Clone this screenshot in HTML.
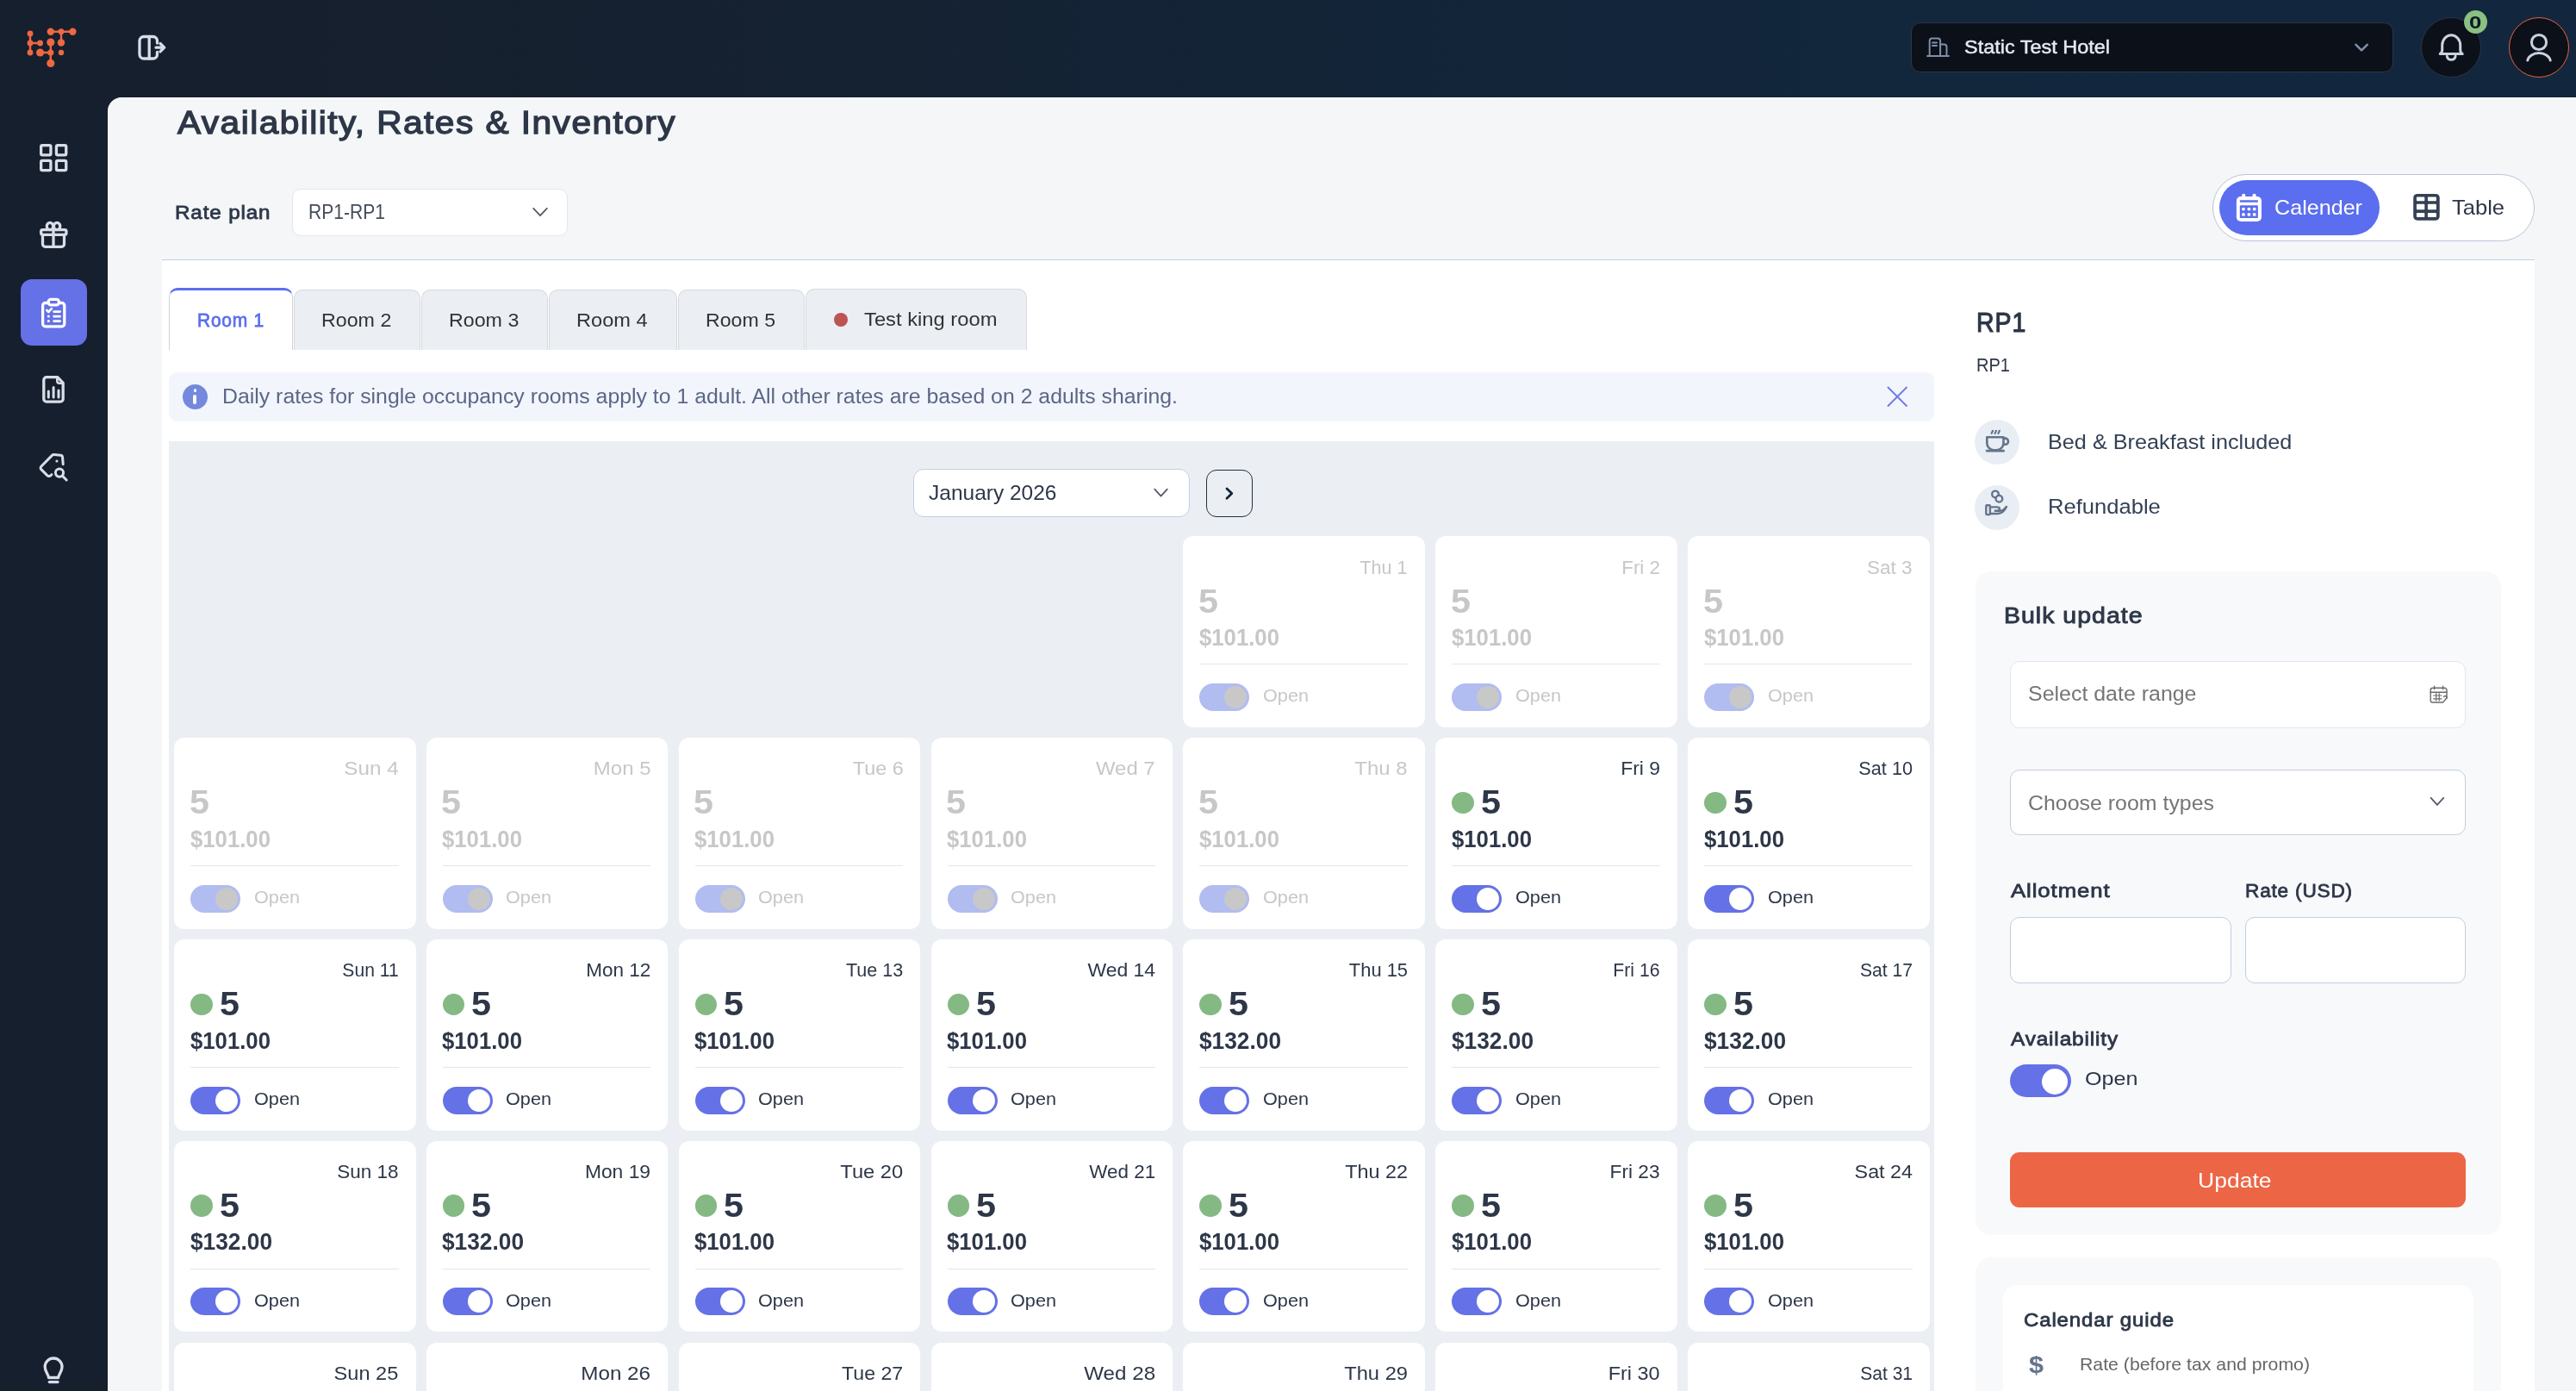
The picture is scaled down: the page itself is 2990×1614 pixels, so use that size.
<!DOCTYPE html>
<html lang="en"><head><meta charset="utf-8"><title>Availability, Rates &amp; Inventory</title><style>
html,body{margin:0;padding:0;width:2990px;height:1614px;overflow:hidden;}
body{background:#f5f6f8;font-family:"Liberation Sans", sans-serif;}
#root{position:relative;width:2990px;height:1614px;overflow:hidden;}
.a{position:absolute;box-sizing:border-box;}
.txt{position:absolute;left:0;top:0;width:2990px;height:1614px;will-change:transform;}
.t{position:absolute;white-space:pre;line-height:normal;font-family:"Liberation Sans", sans-serif;}
</style></head><body><div id="root">
<div class="a" style="left:0px;top:0px;width:2990px;height:113px;background:linear-gradient(90deg,#161f2d 0%,#161f2d 8%,#152232 33%,#132437 50%,#12263c 72%,#12273e 100%);"></div>
<div class="a" style="left:0px;top:0px;width:125px;height:1614px;background:#161f2d;"></div>
<div class="a" style="left:125px;top:113px;width:20px;height:20px;background:#161f2d;"></div>
<div class="a" style="left:125px;top:113px;width:2865px;height:1501px;background:#f5f6f8;border-radius:16px 0 0 0;border-top:1px solid #ffffff;"></div>
<div class="a" style="left:188px;top:301px;width:2754px;height:1313px;background:#ffffff;border-top:1px solid #c3cede;"></div>
<svg class="a" style="left:28px;top:28px;" width="64" height="54" viewBox="28 28 64 54" fill="none"><g stroke="#ee6842" stroke-width="2.4" stroke-linecap="round"><path d="M35 39V61M35 50H46.6M58.8 36.7H84.4M71 36.7V49.5M58.8 49V73.4M46.6 61H58.8"/></g><g fill="#ee6842"><circle cx="35" cy="39" r="3.4"/><circle cx="35" cy="50" r="3.4"/><circle cx="35" cy="61" r="3.4"/><circle cx="46.6" cy="50" r="3.4"/><circle cx="58.8" cy="36.7" r="4.2"/><circle cx="71" cy="36.7" r="3.4"/><circle cx="84.4" cy="36.7" r="4.2"/><circle cx="71" cy="49.5" r="4.2"/><circle cx="71" cy="61" r="3.2"/><circle cx="58.8" cy="49" r="4.6"/><circle cx="58.8" cy="61" r="3.6"/><circle cx="46.6" cy="61" r="4.6"/><circle cx="58.8" cy="73.4" r="4.6"/></g></svg>
<svg class="a" style="left:155px;top:36px;" width="44" height="40" viewBox="155 36 44 40" fill="none"><g stroke="#d8dde8" stroke-width="3.3" stroke-linecap="round" stroke-linejoin="round"><path d="M182.5 50V47.5a5 5 0 0 0-5-5H167a5 5 0 0 0-5 5V63a5 5 0 0 0 5 5h10.5a5 5 0 0 0 5-5V60.5"/><path d="M173.2 42.5V68"/><path d="M181 55.2H190M186 50.5l4.7 4.7-4.7 4.7"/></g></svg>
<svg class="a" style="left:40px;top:160px;" width="46" height="46" viewBox="40 160 46 46" fill="none"><g stroke="#d8dde8" stroke-width="3.3" stroke-linecap="round" stroke-linejoin="round"><rect x="47.65" y="168.65" width="11.3" height="11.3" rx="1.6"/><rect x="65.45" y="168.65" width="11.3" height="11.3" rx="1.6"/><rect x="47.65" y="186.4" width="11.3" height="11.3" rx="1.6"/><rect x="65.45" y="186.4" width="11.3" height="11.3" rx="1.6"/></g></svg>
<svg class="a" style="left:40px;top:250px;" width="46" height="44" viewBox="40 250 46 44" fill="none"><g stroke="#d8dde8" stroke-width="3.3" stroke-linecap="round" stroke-linejoin="round"><rect x="47.7" y="266.55" width="29.25" height="5.85" rx="1.8"/><path d="M49.5 272.4V283.3a3 3 0 0 0 3 3h19a3 3 0 0 0 3-3V272.4"/><path d="M62 266.5V286.3"/><ellipse cx="58" cy="262.5" rx="3.7" ry="4.2"/><ellipse cx="66.1" cy="262.5" rx="3.7" ry="4.2"/></g></svg>
<div class="a" style="left:24px;top:324px;width:77px;height:77px;background:#6571e6;border-radius:13px;"></div>
<svg class="a" style="left:40px;top:340px;" width="46" height="46" viewBox="40 340 46 46" fill="none"><g stroke="#ffffff" stroke-width="3.3" stroke-linecap="round" stroke-linejoin="round"><path d="M55 351.5h-2.4a3 3 0 0 0-3 3v21.3a3 3 0 0 0 3 3h19.2a3 3 0 0 0 3-3v-21.3a3 3 0 0 0-3-3H69.6"/><rect x="56.3" y="347.3" width="12" height="6.6" rx="2.6"/><path d="M54.3 360l2 2 3.6-3.8" stroke-width="2.6"/><path d="M62.6 361.6h7M62.6 367.1h7M62.6 372.6h7" stroke-width="2.8"/><path d="M56.3 367.1h.1M56.3 372.6h.1" stroke-width="3"/></g></svg>
<svg class="a" style="left:40px;top:430px;" width="46" height="44" viewBox="40 430 46 44" fill="none"><g stroke="#d8dde8" stroke-width="3.3" stroke-linecap="round" stroke-linejoin="round"><path d="M66.8 437.7H54a3.2 3.2 0 0 0-3.2 3.2v22a3.2 3.2 0 0 0 3.2 3.2h16a3.2 3.2 0 0 0 3.2-3.2V444.3z"/><path d="M66.3 438.5v3.600a2.600 2.600 0 0 0 2.600 2.600h3.800" stroke-width="2.6"/><path d="M56.3 454v7M62.1 449.5v11.5M68 453v8" stroke-width="3"/></g></svg>
<svg class="a" style="left:40px;top:520px;" width="46" height="44" viewBox="40 520 46 44" fill="none"><g stroke="#d8dde8" stroke-width="3.0" stroke-linecap="round" stroke-linejoin="round"><path d="M60 550.6c-1.6 2-3.4 2.7-5.2 1l-7-7a2.4 2.4 0 0 1 0-3.4l12.4-12.6a3.4 3.4 0 0 1 2.6-1l7.4.7a2.6 2.6 0 0 1 2.4 2.4l.6 8"/><path d="M65.9 535.1h.1" stroke-width="3"/><circle cx="69" cy="548.6" r="4.6"/><path d="M72.6 552.4l4.6 4.6"/></g></svg>
<svg class="a" style="left:44px;top:1566px;" width="40" height="44" viewBox="44 1566 40 44" fill="none"><g stroke="#d8dde8" stroke-width="3.3" stroke-linecap="round" stroke-linejoin="round"><path d="M56.5 1598.5c0-3.6-4.3-6.3-4.3-12.6a9.9 9.9 0 0 1 19.8 0c0 6.300-4.3 9-4.300 12.600z"/><path d="M57.300 1603.600H67"/></g></svg>
<div class="a" style="left:2218px;top:26px;width:560px;height:58px;background:#0b1019;border-radius:11px;border:1px solid #2b3648;"></div>
<svg class="a" style="left:2232px;top:40px;" width="36" height="30" viewBox="2232 40 36 30" fill="none"><g stroke="#7f8fa6" stroke-width="2" stroke-linecap="round" stroke-linejoin="round"><path d="M2239.700 64.500V47.500a3 3 0 0 1 3-3h6.400a3 3 0 0 1 3 3V64.500"/><path d="M2252.100 51.600h4.400a3 3 0 0 1 3 3V64.500"/><path d="M2237 65h25"/><path d="M2243 49.400h5M2243 52.900h5"/></g></svg>
<svg class="a" style="left:2728px;top:44px;" width="28" height="22" viewBox="2728 44 28 22" fill="none"><path d="M2734.500 51.800l6.600 6.600 6.600-6.600" stroke="#7f8fa6" stroke-width="2.6" stroke-linecap="round" stroke-linejoin="round"/></svg>
<div class="a" style="left:2810px;top:20px;width:70px;height:70px;background:#0b1019;border-radius:35px;border:1px solid #2a3445;"></div>
<svg class="a" style="left:2826px;top:34px;" width="40" height="42" viewBox="2826 34 40 42" fill="none"><g stroke="#c9d2de" stroke-width="3" stroke-linecap="round" stroke-linejoin="round"><path d="M2832.200 62.600c1.800-1.200 2.500-2.600 2.500-4.600V52.300a10.500 11.500 0 0 1 21 0v5.700c0 2 .7 3.400 2.500 4.600z"/><path d="M2840.300 65.200a5 5.200 0 0 0 9.800 0"/></g></svg>
<div class="a" style="left:2860px;top:12px;width:27px;height:27px;background:#8bc083;border-radius:14px;"></div>
<div class="a" style="left:2912px;top:20px;width:70px;height:70px;background:#0b1019;border-radius:35px;border:1.5px solid #e8623f;"></div>
<svg class="a" style="left:2926px;top:36px;" width="42" height="40" viewBox="2926 36 42 40" fill="none"><g stroke="#c9d2de" stroke-width="3" stroke-linecap="round"><circle cx="2947" cy="49" r="8.600"/><path d="M2933.800 70a13.400 10.200 0 0 1 26.400 0"/></g></svg>
<div class="a" style="left:339px;top:219px;width:320px;height:55px;background:#ffffff;border-radius:10px;border:1px solid #e2e6ed;"></div>
<svg class="a" style="left:612px;top:236px;" width="30" height="22" viewBox="612 236 30 22" fill="none"><path d="M619.200 241.800l7.800 8.400 7.800-8.400" stroke="#555b66" stroke-width="1.800" stroke-linecap="round" stroke-linejoin="round"/></svg>
<div class="a" style="left:2568px;top:202px;width:374px;height:78px;background:#ffffff;border-radius:39px;border:1px solid #b9c5d8;"></div>
<div class="a" style="left:2576px;top:209px;width:186px;height:64px;background:#5b6eef;border-radius:32px;"></div>
<svg class="a" style="left:2592px;top:222px;" width="36" height="38" viewBox="2592 222 36 38" fill="none"><rect x="2595.9" y="228" width="29.1" height="29" rx="5" fill="#fff"/><rect x="2602.1" y="224.8" width="4.2" height="7" rx="2" fill="#fff"/><rect x="2614.5" y="224.8" width="4.2" height="7" rx="2" fill="#fff"/><rect x="2599.8" y="232.2" width="21.1" height="2.5" rx="0.6" fill="#5b6eef"/><rect x="2599.8" y="238.3" width="21.1" height="14.7" rx="0.8" fill="#5b6eef"/><circle cx="2604" cy="242.6" r="1.95" fill="#fff"/><circle cx="2610.4" cy="242.6" r="1.95" fill="#fff"/><circle cx="2616.7" cy="242.6" r="1.95" fill="#fff"/><circle cx="2604" cy="248.9" r="1.95" fill="#fff"/><circle cx="2610.4" cy="248.9" r="1.95" fill="#fff"/><circle cx="2616.7" cy="248.9" r="1.95" fill="#fff"/></svg>
<svg class="a" style="left:2798px;top:222px;" width="38" height="38" viewBox="2798 222 38 38" fill="none"><rect x="2801.2" y="225" width="30.5" height="30.7" rx="4.6" fill="#334155"/><rect x="2804.9" y="228.6" width="9.4" height="4.7" rx="0.8" fill="#ffffff"/><rect x="2804.9" y="236.8" width="9.4" height="6.5" rx="0.8" fill="#ffffff"/><rect x="2804.9" y="246.9" width="9.4" height="5.1" rx="0.8" fill="#ffffff"/><rect x="2817.9" y="228.6" width="10" height="4.7" rx="0.8" fill="#ffffff"/><rect x="2817.9" y="236.8" width="10" height="6.5" rx="0.8" fill="#ffffff"/><rect x="2817.9" y="246.9" width="10" height="5.1" rx="0.8" fill="#ffffff"/></svg>
<div class="a" style="left:196px;top:334px;width:143.5px;height:72px;background:#fff;border:1px solid #cfd3d8;border-bottom:none;border-top:3px solid #5b6eef;border-radius:10px 10px 0 0;"></div>
<div class="a" style="left:341px;top:336px;width:146.5px;height:70px;background:#ebeff3;border:1px solid #d6d9dd;border-bottom:none;border-radius:10px 10px 0 0;"></div>
<div class="a" style="left:489px;top:336px;width:146.5px;height:70px;background:#ebeff3;border:1px solid #d6d9dd;border-bottom:none;border-radius:10px 10px 0 0;"></div>
<div class="a" style="left:637px;top:336px;width:148.5px;height:70px;background:#ebeff3;border:1px solid #d6d9dd;border-bottom:none;border-radius:10px 10px 0 0;"></div>
<div class="a" style="left:787px;top:336px;width:146.5px;height:70px;background:#ebeff3;border:1px solid #d6d9dd;border-bottom:none;border-radius:10px 10px 0 0;"></div>
<div class="a" style="left:935px;top:335px;width:256.5px;height:71px;background:#ebeff3;border:1px solid #d6d9dd;border-bottom:none;border-radius:10px 10px 0 0;"></div>
<div class="a" style="left:968px;top:363px;width:16px;height:16px;background:#bd5353;border-radius:8px;"></div>
<div class="a" style="left:196px;top:432px;width:2049px;height:57px;background:#f3f5fd;border-radius:9px;"></div>
<div class="a" style="left:212px;top:446px;width:29px;height:29px;background:#7489dd;border-radius:15px;"></div>
<div class="a" style="left:224.7px;top:451.4px;width:3.5px;height:3.5px;background:#fff;border-radius:2px;"></div>
<div class="a" style="left:224.4px;top:458.4px;width:4.1px;height:10.9px;background:#fff;border-radius:2px;"></div>
<svg class="a" style="left:2188px;top:446px;" width="30" height="30" viewBox="2188 446 30 30" fill="none"><path d="M2191.500 449.500l21.500 21.500M2213 449.500l-21.500 21.500" stroke="#6b7adf" stroke-width="1.800" stroke-linecap="round"/></svg>
<div class="a" style="left:196px;top:512px;width:2049px;height:1102px;background:#ebeff3;"></div>
<div class="a" style="left:1060px;top:544px;width:321px;height:56px;background:#ffffff;border-radius:12px;border:1px solid #c3cede;"></div>
<svg class="a" style="left:1334px;top:560px;" width="28" height="24" viewBox="1334 560 28 24" fill="none"><path d="M1340.200 567.600l7.300 8 7.300-8" stroke="#555b66" stroke-width="1.800" stroke-linecap="round" stroke-linejoin="round"/></svg>
<div class="a" style="left:1400px;top:545px;width:54px;height:55px;border-radius:12px;border:1.5px solid #1f3046;"></div>
<svg class="a" style="left:1416px;top:560px;" width="22" height="26" viewBox="1416 560 22 26" fill="none"><path d="M1424 567l5.800 5.600-5.800 5.600" stroke="#14243a" stroke-width="2.800" stroke-linecap="round" stroke-linejoin="round"/></svg>
<div class="a" style="left:1373.4px;top:622.4px;width:280.5px;height:221.8px;background:#fff;border-radius:12px;"></div>
<div class="a" style="left:1392.4px;top:770.4px;width:241.5px;height:1px;background:#e2e6ee;"></div>
<div class="a" style="left:1392.4px;top:793.0999999999999px;width:58px;height:32px;background:#b1bcf0;border-radius:16px;"></div>
<div class="a" style="left:1421.4px;top:796.0999999999999px;width:26px;height:26px;background:#c8c8c8;border-radius:13px;"></div>
<div class="a" style="left:1666.3px;top:622.4px;width:280.5px;height:221.8px;background:#fff;border-radius:12px;"></div>
<div class="a" style="left:1685.3px;top:770.4px;width:241.5px;height:1px;background:#e2e6ee;"></div>
<div class="a" style="left:1685.3px;top:793.0999999999999px;width:58px;height:32px;background:#b1bcf0;border-radius:16px;"></div>
<div class="a" style="left:1714.3px;top:796.0999999999999px;width:26px;height:26px;background:#c8c8c8;border-radius:13px;"></div>
<div class="a" style="left:1959.1px;top:622.4px;width:280.5px;height:221.8px;background:#fff;border-radius:12px;"></div>
<div class="a" style="left:1978.1px;top:770.4px;width:241.5px;height:1px;background:#e2e6ee;"></div>
<div class="a" style="left:1978.1px;top:793.0999999999999px;width:58px;height:32px;background:#b1bcf0;border-radius:16px;"></div>
<div class="a" style="left:2007.1px;top:796.0999999999999px;width:26px;height:26px;background:#c8c8c8;border-radius:13px;"></div>
<div class="a" style="left:202px;top:856.1px;width:280.5px;height:221.8px;background:#fff;border-radius:12px;"></div>
<div class="a" style="left:221px;top:1004.1px;width:241.5px;height:1px;background:#e2e6ee;"></div>
<div class="a" style="left:221px;top:1026.8px;width:58px;height:32px;background:#b1bcf0;border-radius:16px;"></div>
<div class="a" style="left:250px;top:1029.8px;width:26px;height:26px;background:#c8c8c8;border-radius:13px;"></div>
<div class="a" style="left:494.8px;top:856.1px;width:280.5px;height:221.8px;background:#fff;border-radius:12px;"></div>
<div class="a" style="left:513.8px;top:1004.1px;width:241.5px;height:1px;background:#e2e6ee;"></div>
<div class="a" style="left:513.8px;top:1026.8px;width:58px;height:32px;background:#b1bcf0;border-radius:16px;"></div>
<div class="a" style="left:542.8px;top:1029.8px;width:26px;height:26px;background:#c8c8c8;border-radius:13px;"></div>
<div class="a" style="left:787.7px;top:856.1px;width:280.5px;height:221.8px;background:#fff;border-radius:12px;"></div>
<div class="a" style="left:806.7px;top:1004.1px;width:241.5px;height:1px;background:#e2e6ee;"></div>
<div class="a" style="left:806.7px;top:1026.8px;width:58px;height:32px;background:#b1bcf0;border-radius:16px;"></div>
<div class="a" style="left:835.7px;top:1029.8px;width:26px;height:26px;background:#c8c8c8;border-radius:13px;"></div>
<div class="a" style="left:1080.5px;top:856.1px;width:280.5px;height:221.8px;background:#fff;border-radius:12px;"></div>
<div class="a" style="left:1099.5px;top:1004.1px;width:241.5px;height:1px;background:#e2e6ee;"></div>
<div class="a" style="left:1099.5px;top:1026.8px;width:58px;height:32px;background:#b1bcf0;border-radius:16px;"></div>
<div class="a" style="left:1128.5px;top:1029.8px;width:26px;height:26px;background:#c8c8c8;border-radius:13px;"></div>
<div class="a" style="left:1373.4px;top:856.1px;width:280.5px;height:221.8px;background:#fff;border-radius:12px;"></div>
<div class="a" style="left:1392.4px;top:1004.1px;width:241.5px;height:1px;background:#e2e6ee;"></div>
<div class="a" style="left:1392.4px;top:1026.8px;width:58px;height:32px;background:#b1bcf0;border-radius:16px;"></div>
<div class="a" style="left:1421.4px;top:1029.8px;width:26px;height:26px;background:#c8c8c8;border-radius:13px;"></div>
<div class="a" style="left:1666.3px;top:856.1px;width:280.5px;height:221.8px;background:#fff;border-radius:12px;"></div>
<div class="a" style="left:1685.3px;top:918.7px;width:25.5px;height:25.5px;background:#84b984;border-radius:13px;"></div>
<div class="a" style="left:1685.3px;top:1004.1px;width:241.5px;height:1px;background:#e2e6ee;"></div>
<div class="a" style="left:1685.3px;top:1026.8px;width:58px;height:32px;background:#6571e6;border-radius:16px;"></div>
<div class="a" style="left:1714.3px;top:1029.8px;width:26px;height:26px;background:#fff;border-radius:13px;"></div>
<div class="a" style="left:1959.1px;top:856.1px;width:280.5px;height:221.8px;background:#fff;border-radius:12px;"></div>
<div class="a" style="left:1978.1px;top:918.7px;width:25.5px;height:25.5px;background:#84b984;border-radius:13px;"></div>
<div class="a" style="left:1978.1px;top:1004.1px;width:241.5px;height:1px;background:#e2e6ee;"></div>
<div class="a" style="left:1978.1px;top:1026.8px;width:58px;height:32px;background:#6571e6;border-radius:16px;"></div>
<div class="a" style="left:2007.1px;top:1029.8px;width:26px;height:26px;background:#fff;border-radius:13px;"></div>
<div class="a" style="left:202px;top:1089.9px;width:280.5px;height:221.8px;background:#fff;border-radius:12px;"></div>
<div class="a" style="left:221px;top:1152.5px;width:25.5px;height:25.5px;background:#84b984;border-radius:13px;"></div>
<div class="a" style="left:221px;top:1237.9px;width:241.5px;height:1px;background:#e2e6ee;"></div>
<div class="a" style="left:221px;top:1260.6000000000001px;width:58px;height:32px;background:#6571e6;border-radius:16px;"></div>
<div class="a" style="left:250px;top:1263.6000000000001px;width:26px;height:26px;background:#fff;border-radius:13px;"></div>
<div class="a" style="left:494.8px;top:1089.9px;width:280.5px;height:221.8px;background:#fff;border-radius:12px;"></div>
<div class="a" style="left:513.8px;top:1152.5px;width:25.5px;height:25.5px;background:#84b984;border-radius:13px;"></div>
<div class="a" style="left:513.8px;top:1237.9px;width:241.5px;height:1px;background:#e2e6ee;"></div>
<div class="a" style="left:513.8px;top:1260.6000000000001px;width:58px;height:32px;background:#6571e6;border-radius:16px;"></div>
<div class="a" style="left:542.8px;top:1263.6000000000001px;width:26px;height:26px;background:#fff;border-radius:13px;"></div>
<div class="a" style="left:787.7px;top:1089.9px;width:280.5px;height:221.8px;background:#fff;border-radius:12px;"></div>
<div class="a" style="left:806.7px;top:1152.5px;width:25.5px;height:25.5px;background:#84b984;border-radius:13px;"></div>
<div class="a" style="left:806.7px;top:1237.9px;width:241.5px;height:1px;background:#e2e6ee;"></div>
<div class="a" style="left:806.7px;top:1260.6000000000001px;width:58px;height:32px;background:#6571e6;border-radius:16px;"></div>
<div class="a" style="left:835.7px;top:1263.6000000000001px;width:26px;height:26px;background:#fff;border-radius:13px;"></div>
<div class="a" style="left:1080.5px;top:1089.9px;width:280.5px;height:221.8px;background:#fff;border-radius:12px;"></div>
<div class="a" style="left:1099.5px;top:1152.5px;width:25.5px;height:25.5px;background:#84b984;border-radius:13px;"></div>
<div class="a" style="left:1099.5px;top:1237.9px;width:241.5px;height:1px;background:#e2e6ee;"></div>
<div class="a" style="left:1099.5px;top:1260.6000000000001px;width:58px;height:32px;background:#6571e6;border-radius:16px;"></div>
<div class="a" style="left:1128.5px;top:1263.6000000000001px;width:26px;height:26px;background:#fff;border-radius:13px;"></div>
<div class="a" style="left:1373.4px;top:1089.9px;width:280.5px;height:221.8px;background:#fff;border-radius:12px;"></div>
<div class="a" style="left:1392.4px;top:1152.5px;width:25.5px;height:25.5px;background:#84b984;border-radius:13px;"></div>
<div class="a" style="left:1392.4px;top:1237.9px;width:241.5px;height:1px;background:#e2e6ee;"></div>
<div class="a" style="left:1392.4px;top:1260.6000000000001px;width:58px;height:32px;background:#6571e6;border-radius:16px;"></div>
<div class="a" style="left:1421.4px;top:1263.6000000000001px;width:26px;height:26px;background:#fff;border-radius:13px;"></div>
<div class="a" style="left:1666.3px;top:1089.9px;width:280.5px;height:221.8px;background:#fff;border-radius:12px;"></div>
<div class="a" style="left:1685.3px;top:1152.5px;width:25.5px;height:25.5px;background:#84b984;border-radius:13px;"></div>
<div class="a" style="left:1685.3px;top:1237.9px;width:241.5px;height:1px;background:#e2e6ee;"></div>
<div class="a" style="left:1685.3px;top:1260.6000000000001px;width:58px;height:32px;background:#6571e6;border-radius:16px;"></div>
<div class="a" style="left:1714.3px;top:1263.6000000000001px;width:26px;height:26px;background:#fff;border-radius:13px;"></div>
<div class="a" style="left:1959.1px;top:1089.9px;width:280.5px;height:221.8px;background:#fff;border-radius:12px;"></div>
<div class="a" style="left:1978.1px;top:1152.5px;width:25.5px;height:25.5px;background:#84b984;border-radius:13px;"></div>
<div class="a" style="left:1978.1px;top:1237.9px;width:241.5px;height:1px;background:#e2e6ee;"></div>
<div class="a" style="left:1978.1px;top:1260.6000000000001px;width:58px;height:32px;background:#6571e6;border-radius:16px;"></div>
<div class="a" style="left:2007.1px;top:1263.6000000000001px;width:26px;height:26px;background:#fff;border-radius:13px;"></div>
<div class="a" style="left:202px;top:1323.7px;width:280.5px;height:221.8px;background:#fff;border-radius:12px;"></div>
<div class="a" style="left:221px;top:1386.3px;width:25.5px;height:25.5px;background:#84b984;border-radius:13px;"></div>
<div class="a" style="left:221px;top:1471.7px;width:241.5px;height:1px;background:#e2e6ee;"></div>
<div class="a" style="left:221px;top:1494.4px;width:58px;height:32px;background:#6571e6;border-radius:16px;"></div>
<div class="a" style="left:250px;top:1497.4px;width:26px;height:26px;background:#fff;border-radius:13px;"></div>
<div class="a" style="left:494.8px;top:1323.7px;width:280.5px;height:221.8px;background:#fff;border-radius:12px;"></div>
<div class="a" style="left:513.8px;top:1386.3px;width:25.5px;height:25.5px;background:#84b984;border-radius:13px;"></div>
<div class="a" style="left:513.8px;top:1471.7px;width:241.5px;height:1px;background:#e2e6ee;"></div>
<div class="a" style="left:513.8px;top:1494.4px;width:58px;height:32px;background:#6571e6;border-radius:16px;"></div>
<div class="a" style="left:542.8px;top:1497.4px;width:26px;height:26px;background:#fff;border-radius:13px;"></div>
<div class="a" style="left:787.7px;top:1323.7px;width:280.5px;height:221.8px;background:#fff;border-radius:12px;"></div>
<div class="a" style="left:806.7px;top:1386.3px;width:25.5px;height:25.5px;background:#84b984;border-radius:13px;"></div>
<div class="a" style="left:806.7px;top:1471.7px;width:241.5px;height:1px;background:#e2e6ee;"></div>
<div class="a" style="left:806.7px;top:1494.4px;width:58px;height:32px;background:#6571e6;border-radius:16px;"></div>
<div class="a" style="left:835.7px;top:1497.4px;width:26px;height:26px;background:#fff;border-radius:13px;"></div>
<div class="a" style="left:1080.5px;top:1323.7px;width:280.5px;height:221.8px;background:#fff;border-radius:12px;"></div>
<div class="a" style="left:1099.5px;top:1386.3px;width:25.5px;height:25.5px;background:#84b984;border-radius:13px;"></div>
<div class="a" style="left:1099.5px;top:1471.7px;width:241.5px;height:1px;background:#e2e6ee;"></div>
<div class="a" style="left:1099.5px;top:1494.4px;width:58px;height:32px;background:#6571e6;border-radius:16px;"></div>
<div class="a" style="left:1128.5px;top:1497.4px;width:26px;height:26px;background:#fff;border-radius:13px;"></div>
<div class="a" style="left:1373.4px;top:1323.7px;width:280.5px;height:221.8px;background:#fff;border-radius:12px;"></div>
<div class="a" style="left:1392.4px;top:1386.3px;width:25.5px;height:25.5px;background:#84b984;border-radius:13px;"></div>
<div class="a" style="left:1392.4px;top:1471.7px;width:241.5px;height:1px;background:#e2e6ee;"></div>
<div class="a" style="left:1392.4px;top:1494.4px;width:58px;height:32px;background:#6571e6;border-radius:16px;"></div>
<div class="a" style="left:1421.4px;top:1497.4px;width:26px;height:26px;background:#fff;border-radius:13px;"></div>
<div class="a" style="left:1666.3px;top:1323.7px;width:280.5px;height:221.8px;background:#fff;border-radius:12px;"></div>
<div class="a" style="left:1685.3px;top:1386.3px;width:25.5px;height:25.5px;background:#84b984;border-radius:13px;"></div>
<div class="a" style="left:1685.3px;top:1471.7px;width:241.5px;height:1px;background:#e2e6ee;"></div>
<div class="a" style="left:1685.3px;top:1494.4px;width:58px;height:32px;background:#6571e6;border-radius:16px;"></div>
<div class="a" style="left:1714.3px;top:1497.4px;width:26px;height:26px;background:#fff;border-radius:13px;"></div>
<div class="a" style="left:1959.1px;top:1323.7px;width:280.5px;height:221.8px;background:#fff;border-radius:12px;"></div>
<div class="a" style="left:1978.1px;top:1386.3px;width:25.5px;height:25.5px;background:#84b984;border-radius:13px;"></div>
<div class="a" style="left:1978.1px;top:1471.7px;width:241.5px;height:1px;background:#e2e6ee;"></div>
<div class="a" style="left:1978.1px;top:1494.4px;width:58px;height:32px;background:#6571e6;border-radius:16px;"></div>
<div class="a" style="left:2007.1px;top:1497.4px;width:26px;height:26px;background:#fff;border-radius:13px;"></div>
<div class="a" style="left:202px;top:1557.5px;width:280.5px;height:221.8px;background:#fff;border-radius:12px;"></div>
<div class="a" style="left:494.8px;top:1557.5px;width:280.5px;height:221.8px;background:#fff;border-radius:12px;"></div>
<div class="a" style="left:787.7px;top:1557.5px;width:280.5px;height:221.8px;background:#fff;border-radius:12px;"></div>
<div class="a" style="left:1080.5px;top:1557.5px;width:280.5px;height:221.8px;background:#fff;border-radius:12px;"></div>
<div class="a" style="left:1373.4px;top:1557.5px;width:280.5px;height:221.8px;background:#fff;border-radius:12px;"></div>
<div class="a" style="left:1666.3px;top:1557.5px;width:280.5px;height:221.8px;background:#fff;border-radius:12px;"></div>
<div class="a" style="left:1959.1px;top:1557.5px;width:280.5px;height:221.8px;background:#fff;border-radius:12px;"></div>
<div class="a" style="left:2292px;top:487px;width:51.5px;height:51.5px;background:#e9eef4;border-radius:26px;"></div>
<div class="a" style="left:2292px;top:563px;width:51.5px;height:51.5px;background:#e9eef4;border-radius:26px;"></div>
<svg class="a" style="left:2300px;top:494px;" width="36" height="34" viewBox="2300 494 36 34" fill="none"><g stroke="#64748b" stroke-width="2.600" stroke-linecap="round" stroke-linejoin="round"><path d="M2306.300 507.300h19.200v6.600a8.400 8.400 0 0 1-8.400 8.400h-2.400a8.400 8.400 0 0 1-8.400-8.400z"/><path d="M2325.500 508.600h1.900a3.600 3.600 0 0 1 0 7.200h-2.200"/><path d="M2306 523.100h19.800"/><path d="M2313 499.800l-1.300 3.100M2316.900 499.800l-1.300 3.100M2320.800 499.800l-1.300 3.100" stroke-width="2.200"/></g></svg>
<svg class="a" style="left:2300px;top:566px;" width="36" height="36" viewBox="2300 566 36 36" fill="none"><g stroke="#64748b" stroke-width="2.400" stroke-linecap="round" stroke-linejoin="round"><circle cx="2316" cy="573.400" r="3.800"/><circle cx="2320.400" cy="578.700" r="3.800" fill="#e9eef4"/><rect x="2305.300" y="586.200" width="4.600" height="10.900" rx="1"/><path d="M2310.500 588.400h7.300c1.900 0 3.200.9 3.200 2.200s-1.300 2.200-3 2.200h-2.300"/><path d="M2318.500 592.800h3.300c2.800 0 5-2 7.100-4.700"/><path d="M2310.500 596h8.600c4.500 0 7.500-3 9.800-7.900"/></g></svg>
<div class="a" style="left:2293px;top:663px;width:609.5px;height:770px;background:#f8f9fb;border-radius:18px;"></div>
<div class="a" style="left:2333px;top:766.5px;width:529px;height:78px;background:#ffffff;border-radius:11px;border:1px solid #e2e6ed;"></div>
<svg class="a" style="left:2816px;top:792px;" width="30" height="28" viewBox="2816 792 30 28" fill="none"><g stroke="#6a6a6a" stroke-width="1.400" stroke-linecap="round" stroke-linejoin="round"><path d="M2835.500 815h-11.700a2.600 2.600 0 0 1-2.600-2.600v-11.600a2.600 2.600 0 0 1 2.600-2.600h13.600a2.600 2.600 0 0 1 2.600 2.600v9.600"/><path d="M2821.200 803.200h18.800M2825.600 796.200v3.600M2835.600 796.200v3.600"/><path d="M2824.500 807h9.500M2824.500 810.800h9.500M2827.700 804.500v8.500M2831.200 804.500v8.500" stroke-width="1.200"/><path d="M2836.500 808.500a1.800 1.800 0 1 1 1.800 2.600M2836 814.500l3-3.400"/></g></svg>
<div class="a" style="left:2333px;top:893px;width:529px;height:76px;background:#ffffff;border-radius:11px;border:1px solid #c3cede;"></div>
<svg class="a" style="left:2814px;top:918px;" width="30" height="24" viewBox="2814 918 30 24" fill="none"><path d="M2821.600 925.800l7.300 8 7.300-8" stroke="#555b66" stroke-width="1.800" stroke-linecap="round" stroke-linejoin="round"/></svg>
<div class="a" style="left:2333px;top:1064px;width:257px;height:77px;background:#ffffff;border-radius:11px;border:1px solid #c3cede;"></div>
<div class="a" style="left:2606px;top:1064px;width:256px;height:77px;background:#ffffff;border-radius:11px;border:1px solid #c3cede;"></div>
<div class="a" style="left:2333px;top:1235px;width:71px;height:38px;background:#6571e6;border-radius:19px;"></div>
<div class="a" style="left:2370px;top:1239.5px;width:30px;height:30px;background:#ffffff;border-radius:15px;"></div>
<div class="a" style="left:2333px;top:1337px;width:529px;height:64px;background:#ec6646;border-radius:11px;"></div>
<div class="a" style="left:2293px;top:1458.5px;width:609.5px;height:200px;background:#f8f9fb;border-radius:18px;"></div>
<div class="a" style="left:2325px;top:1491px;width:545.5px;height:160px;background:#ffffff;border-radius:16px;"></div>
<div class="txt">
<span class="t" style="left:2279.5px;transform-origin:0 0;top:42.15px;font-size:22.6px;-webkit-text-stroke:0.45px #e6ebf2;color:#e6ebf2;transform:scaleX(1.0378);">Static Test Hotel</span>
<span class="t" style="left:2866.33px;transform-origin:0 0;top:14.65px;font-size:19.5px;font-weight:bold;color:#0f1724;transform:scaleX(1.32);">0</span>
<span class="t" style="left:205.5px;transform-origin:0 0;top:121.96px;font-size:36.78px;-webkit-text-stroke:1.31px #2d3748;letter-spacing:1.31px;color:#2d3748;transform:scaleX(1.1061);">Availability, Rates &amp; Inventory</span>
<span class="t" style="left:203.3px;transform-origin:0 0;top:232.59px;font-size:22.87px;-webkit-text-stroke:0.82px #2d3748;letter-spacing:0.82px;color:#2d3748;transform:scaleX(1.059);">Rate plan</span>
<span class="t" style="left:358px;transform-origin:0 0;top:231.98px;font-size:24px;color:#444c5a;transform:scaleX(0.8779);">RP1-RP1</span>
<span class="t" style="left:2640px;transform-origin:0 0;top:227.48px;font-size:24px;color:#ffffff;transform:scaleX(1.0472);">Calender</span>
<span class="t" style="left:2845.5px;transform-origin:0 0;top:227.48px;font-size:24px;color:#2d3748;transform:scaleX(1.0632);">Table</span>
<span class="t" style="left:228.7px;transform-origin:0 0;top:359.71px;font-size:21.44px;-webkit-text-stroke:0.77px #5b6eef;letter-spacing:0.77px;color:#5b6eef;transform:scaleX(0.9786);">Room 1</span>
<span class="t" style="left:372.7px;transform-origin:0 0;top:359.14px;font-size:22.5px;color:#333;transform:scaleX(1.0318);">Room 2</span>
<span class="t" style="left:520.7px;transform-origin:0 0;top:359.14px;font-size:22.5px;color:#333;transform:scaleX(1.0318);">Room 3</span>
<span class="t" style="left:668.7px;transform-origin:0 0;top:359.14px;font-size:22.5px;color:#333;transform:scaleX(1.0483);">Room 4</span>
<span class="t" style="left:819px;transform-origin:0 0;top:359.14px;font-size:22.5px;color:#333;transform:scaleX(1.028);">Room 5</span>
<span class="t" style="left:1003px;transform-origin:0 0;top:358.44px;font-size:22.5px;color:#333;transform:scaleX(1.056);">Test king room</span>
<span class="t" style="left:257.5px;transform-origin:0 0;top:446.73px;font-size:23.5px;color:#5a6785;transform:scaleX(1.0572);">Daily rates for single occupancy rooms apply to 1 adult. All other rates are based on 2 adults sharing.</span>
<span class="t" style="left:1078px;transform-origin:0 0;top:558.64px;font-size:23.6px;color:#2d3748;transform:scaleX(1.0386);">January 2026</span>
<span class="t" style="right:1356.1px;transform-origin:100% 0;top:645.64px;font-size:22.5px;color:#c7c7c7;transform:scaleX(0.9575);">Thu 1</span>
<span class="t" style="left:1390.9px;transform-origin:0 0;top:675.74px;font-size:38.3px;font-weight:bold;color:#c7c7c7;transform:scaleX(1.08);">5</span>
<span class="t" style="left:1391.9px;transform-origin:0 0;top:723.11px;font-size:28.5px;font-weight:bold;color:#c7c7c7;transform:scaleX(0.9026);">$101.00</span>
<span class="t" style="left:1465.9px;transform-origin:0 0;top:796.3px;font-size:20px;color:#c7c7c7;transform:scaleX(1.083);">Open</span>
<span class="t" style="right:1063.2px;transform-origin:100% 0;top:645.64px;font-size:22.5px;color:#c7c7c7;transform:scaleX(0.9956);">Fri 2</span>
<span class="t" style="left:1683.8px;transform-origin:0 0;top:675.74px;font-size:38.3px;font-weight:bold;color:#c7c7c7;transform:scaleX(1.08);">5</span>
<span class="t" style="left:1684.8px;transform-origin:0 0;top:723.11px;font-size:28.5px;font-weight:bold;color:#c7c7c7;transform:scaleX(0.9026);">$101.00</span>
<span class="t" style="left:1758.8px;transform-origin:0 0;top:796.3px;font-size:20px;color:#c7c7c7;transform:scaleX(1.083);">Open</span>
<span class="t" style="right:770.4000000000001px;transform-origin:100% 0;top:645.64px;font-size:22.5px;color:#c7c7c7;">Sat 3</span>
<span class="t" style="left:1976.6px;transform-origin:0 0;top:675.74px;font-size:38.3px;font-weight:bold;color:#c7c7c7;transform:scaleX(1.08);">5</span>
<span class="t" style="left:1977.6px;transform-origin:0 0;top:723.11px;font-size:28.5px;font-weight:bold;color:#c7c7c7;transform:scaleX(0.9026);">$101.00</span>
<span class="t" style="left:2051.6px;transform-origin:0 0;top:796.3px;font-size:20px;color:#c7c7c7;transform:scaleX(1.083);">Open</span>
<span class="t" style="right:2527.5px;transform-origin:100% 0;top:879.34px;font-size:22.5px;color:#c7c7c7;transform:scaleX(1.0797);">Sun 4</span>
<span class="t" style="left:219.5px;transform-origin:0 0;top:909.44px;font-size:38.3px;font-weight:bold;color:#c7c7c7;transform:scaleX(1.08);">5</span>
<span class="t" style="left:220.5px;transform-origin:0 0;top:956.81px;font-size:28.5px;font-weight:bold;color:#c7c7c7;transform:scaleX(0.9026);">$101.00</span>
<span class="t" style="left:294.5px;transform-origin:0 0;top:1030.0px;font-size:20px;color:#c7c7c7;transform:scaleX(1.083);">Open</span>
<span class="t" style="right:2234.7px;transform-origin:100% 0;top:879.34px;font-size:22.5px;color:#c7c7c7;transform:scaleX(1.0672);">Mon 5</span>
<span class="t" style="left:512.3px;transform-origin:0 0;top:909.44px;font-size:38.3px;font-weight:bold;color:#c7c7c7;transform:scaleX(1.08);">5</span>
<span class="t" style="left:513.3px;transform-origin:0 0;top:956.81px;font-size:28.5px;font-weight:bold;color:#c7c7c7;transform:scaleX(0.9026);">$101.00</span>
<span class="t" style="left:587.3px;transform-origin:0 0;top:1030.0px;font-size:20px;color:#c7c7c7;transform:scaleX(1.083);">Open</span>
<span class="t" style="right:1941.8px;transform-origin:100% 0;top:879.34px;font-size:22.5px;color:#c7c7c7;transform:scaleX(1.0379);">Tue 6</span>
<span class="t" style="left:805.2px;transform-origin:0 0;top:909.44px;font-size:38.3px;font-weight:bold;color:#c7c7c7;transform:scaleX(1.08);">5</span>
<span class="t" style="left:806.2px;transform-origin:0 0;top:956.81px;font-size:28.5px;font-weight:bold;color:#c7c7c7;transform:scaleX(0.9026);">$101.00</span>
<span class="t" style="left:880.2px;transform-origin:0 0;top:1030.0px;font-size:20px;color:#c7c7c7;transform:scaleX(1.083);">Open</span>
<span class="t" style="right:1649.0px;transform-origin:100% 0;top:879.34px;font-size:22.5px;color:#c7c7c7;transform:scaleX(1.0623);">Wed 7</span>
<span class="t" style="left:1098.0px;transform-origin:0 0;top:909.44px;font-size:38.3px;font-weight:bold;color:#c7c7c7;transform:scaleX(1.08);">5</span>
<span class="t" style="left:1099.0px;transform-origin:0 0;top:956.81px;font-size:28.5px;font-weight:bold;color:#c7c7c7;transform:scaleX(0.9026);">$101.00</span>
<span class="t" style="left:1173.0px;transform-origin:0 0;top:1030.0px;font-size:20px;color:#c7c7c7;transform:scaleX(1.083);">Open</span>
<span class="t" style="right:1356.1px;transform-origin:100% 0;top:879.34px;font-size:22.5px;color:#c7c7c7;transform:scaleX(1.0635);">Thu 8</span>
<span class="t" style="left:1390.9px;transform-origin:0 0;top:909.44px;font-size:38.3px;font-weight:bold;color:#c7c7c7;transform:scaleX(1.08);">5</span>
<span class="t" style="left:1391.9px;transform-origin:0 0;top:956.81px;font-size:28.5px;font-weight:bold;color:#c7c7c7;transform:scaleX(0.9026);">$101.00</span>
<span class="t" style="left:1465.9px;transform-origin:0 0;top:1030.0px;font-size:20px;color:#c7c7c7;transform:scaleX(1.083);">Open</span>
<span class="t" style="right:1063.2px;transform-origin:100% 0;top:879.34px;font-size:22.5px;color:#2d3748;transform:scaleX(1.0178);">Fri 9</span>
<span class="t" style="left:1718.8px;transform-origin:0 0;top:909.44px;font-size:38.3px;font-weight:bold;color:#2d3748;transform:scaleX(1.08);">5</span>
<span class="t" style="left:1684.8px;transform-origin:0 0;top:956.81px;font-size:28.5px;font-weight:bold;color:#2d3748;transform:scaleX(0.9026);">$101.00</span>
<span class="t" style="left:1758.8px;transform-origin:0 0;top:1030.0px;font-size:20px;color:#2d3748;transform:scaleX(1.083);">Open</span>
<span class="t" style="right:770.4000000000001px;transform-origin:100% 0;top:879.34px;font-size:22.5px;color:#2d3748;transform:scaleX(0.9652);">Sat 10</span>
<span class="t" style="left:2011.6px;transform-origin:0 0;top:909.44px;font-size:38.3px;font-weight:bold;color:#2d3748;transform:scaleX(1.08);">5</span>
<span class="t" style="left:1977.6px;transform-origin:0 0;top:956.81px;font-size:28.5px;font-weight:bold;color:#2d3748;transform:scaleX(0.9026);">$101.00</span>
<span class="t" style="left:2051.6px;transform-origin:0 0;top:1030.0px;font-size:20px;color:#2d3748;transform:scaleX(1.083);">Open</span>
<span class="t" style="right:2527.5px;transform-origin:100% 0;top:1113.14px;font-size:22.5px;color:#2d3748;transform:scaleX(0.9375);">Sun 11</span>
<span class="t" style="left:254.5px;transform-origin:0 0;top:1143.24px;font-size:38.3px;font-weight:bold;color:#2d3748;transform:scaleX(1.08);">5</span>
<span class="t" style="left:220.5px;transform-origin:0 0;top:1190.61px;font-size:28.5px;font-weight:bold;color:#2d3748;transform:scaleX(0.9026);">$101.00</span>
<span class="t" style="left:294.5px;transform-origin:0 0;top:1263.8px;font-size:20px;color:#2d3748;transform:scaleX(1.083);">Open</span>
<span class="t" style="right:2234.7px;transform-origin:100% 0;top:1113.14px;font-size:22.5px;color:#2d3748;">Mon 12</span>
<span class="t" style="left:547.3px;transform-origin:0 0;top:1143.24px;font-size:38.3px;font-weight:bold;color:#2d3748;transform:scaleX(1.08);">5</span>
<span class="t" style="left:513.3px;transform-origin:0 0;top:1190.61px;font-size:28.5px;font-weight:bold;color:#2d3748;transform:scaleX(0.9026);">$101.00</span>
<span class="t" style="left:587.3px;transform-origin:0 0;top:1263.8px;font-size:20px;color:#2d3748;transform:scaleX(1.083);">Open</span>
<span class="t" style="right:1941.8px;transform-origin:100% 0;top:1113.14px;font-size:22.5px;color:#2d3748;transform:scaleX(0.9571);">Tue 13</span>
<span class="t" style="left:840.2px;transform-origin:0 0;top:1143.24px;font-size:38.3px;font-weight:bold;color:#2d3748;transform:scaleX(1.08);">5</span>
<span class="t" style="left:806.2px;transform-origin:0 0;top:1190.61px;font-size:28.5px;font-weight:bold;color:#2d3748;transform:scaleX(0.9026);">$101.00</span>
<span class="t" style="left:880.2px;transform-origin:0 0;top:1263.8px;font-size:20px;color:#2d3748;transform:scaleX(1.083);">Open</span>
<span class="t" style="right:1649.0px;transform-origin:100% 0;top:1113.14px;font-size:22.5px;color:#2d3748;transform:scaleX(1.0209);">Wed 14</span>
<span class="t" style="left:1133.0px;transform-origin:0 0;top:1143.24px;font-size:38.3px;font-weight:bold;color:#2d3748;transform:scaleX(1.08);">5</span>
<span class="t" style="left:1099.0px;transform-origin:0 0;top:1190.61px;font-size:28.5px;font-weight:bold;color:#2d3748;transform:scaleX(0.9026);">$101.00</span>
<span class="t" style="left:1173.0px;transform-origin:0 0;top:1263.8px;font-size:20px;color:#2d3748;transform:scaleX(1.083);">Open</span>
<span class="t" style="right:1356.1px;transform-origin:100% 0;top:1113.14px;font-size:22.5px;color:#2d3748;transform:scaleX(0.9734);">Thu 15</span>
<span class="t" style="left:1425.9px;transform-origin:0 0;top:1143.24px;font-size:38.3px;font-weight:bold;color:#2d3748;transform:scaleX(1.08);">5</span>
<span class="t" style="left:1391.9px;transform-origin:0 0;top:1190.61px;font-size:28.5px;font-weight:bold;color:#2d3748;transform:scaleX(0.9221);">$132.00</span>
<span class="t" style="left:1465.9px;transform-origin:0 0;top:1263.8px;font-size:20px;color:#2d3748;transform:scaleX(1.083);">Open</span>
<span class="t" style="right:1063.2px;transform-origin:100% 0;top:1113.14px;font-size:22.5px;color:#2d3748;transform:scaleX(0.9424);">Fri 16</span>
<span class="t" style="left:1718.8px;transform-origin:0 0;top:1143.24px;font-size:38.3px;font-weight:bold;color:#2d3748;transform:scaleX(1.08);">5</span>
<span class="t" style="left:1684.8px;transform-origin:0 0;top:1190.61px;font-size:28.5px;font-weight:bold;color:#2d3748;transform:scaleX(0.9221);">$132.00</span>
<span class="t" style="left:1758.8px;transform-origin:0 0;top:1263.8px;font-size:20px;color:#2d3748;transform:scaleX(1.083);">Open</span>
<span class="t" style="right:770.4000000000001px;transform-origin:100% 0;top:1113.14px;font-size:22.5px;color:#2d3748;transform:scaleX(0.9391);">Sat 17</span>
<span class="t" style="left:2011.6px;transform-origin:0 0;top:1143.24px;font-size:38.3px;font-weight:bold;color:#2d3748;transform:scaleX(1.08);">5</span>
<span class="t" style="left:1977.6px;transform-origin:0 0;top:1190.61px;font-size:28.5px;font-weight:bold;color:#2d3748;transform:scaleX(0.9221);">$132.00</span>
<span class="t" style="left:2051.6px;transform-origin:0 0;top:1263.8px;font-size:20px;color:#2d3748;transform:scaleX(1.083);">Open</span>
<span class="t" style="right:2527.5px;transform-origin:100% 0;top:1346.94px;font-size:22.5px;color:#2d3748;">Sun 18</span>
<span class="t" style="left:254.5px;transform-origin:0 0;top:1377.04px;font-size:38.3px;font-weight:bold;color:#2d3748;transform:scaleX(1.08);">5</span>
<span class="t" style="left:220.5px;transform-origin:0 0;top:1424.41px;font-size:28.5px;font-weight:bold;color:#2d3748;transform:scaleX(0.9221);">$132.00</span>
<span class="t" style="left:294.5px;transform-origin:0 0;top:1497.6px;font-size:20px;color:#2d3748;transform:scaleX(1.083);">Open</span>
<span class="t" style="right:2234.7px;transform-origin:100% 0;top:1346.94px;font-size:22.5px;color:#2d3748;transform:scaleX(1.0145);">Mon 19</span>
<span class="t" style="left:547.3px;transform-origin:0 0;top:1377.04px;font-size:38.3px;font-weight:bold;color:#2d3748;transform:scaleX(1.08);">5</span>
<span class="t" style="left:513.3px;transform-origin:0 0;top:1424.41px;font-size:28.5px;font-weight:bold;color:#2d3748;transform:scaleX(0.9221);">$132.00</span>
<span class="t" style="left:587.3px;transform-origin:0 0;top:1497.6px;font-size:20px;color:#2d3748;transform:scaleX(1.083);">Open</span>
<span class="t" style="right:1941.8px;transform-origin:100% 0;top:1346.94px;font-size:22.5px;color:#2d3748;transform:scaleX(1.0525);">Tue 20</span>
<span class="t" style="left:840.2px;transform-origin:0 0;top:1377.04px;font-size:38.3px;font-weight:bold;color:#2d3748;transform:scaleX(1.08);">5</span>
<span class="t" style="left:806.2px;transform-origin:0 0;top:1424.41px;font-size:28.5px;font-weight:bold;color:#2d3748;transform:scaleX(0.9026);">$101.00</span>
<span class="t" style="left:880.2px;transform-origin:0 0;top:1497.6px;font-size:20px;color:#2d3748;transform:scaleX(1.083);">Open</span>
<span class="t" style="right:1649.0px;transform-origin:100% 0;top:1346.94px;font-size:22.5px;color:#2d3748;transform:scaleX(0.9962);">Wed 21</span>
<span class="t" style="left:1133.0px;transform-origin:0 0;top:1377.04px;font-size:38.3px;font-weight:bold;color:#2d3748;transform:scaleX(1.08);">5</span>
<span class="t" style="left:1099.0px;transform-origin:0 0;top:1424.41px;font-size:28.5px;font-weight:bold;color:#2d3748;transform:scaleX(0.9026);">$101.00</span>
<span class="t" style="left:1173.0px;transform-origin:0 0;top:1497.6px;font-size:20px;color:#2d3748;transform:scaleX(1.083);">Open</span>
<span class="t" style="right:1356.1px;transform-origin:100% 0;top:1346.94px;font-size:22.5px;color:#2d3748;transform:scaleX(1.0405);">Thu 22</span>
<span class="t" style="left:1425.9px;transform-origin:0 0;top:1377.04px;font-size:38.3px;font-weight:bold;color:#2d3748;transform:scaleX(1.08);">5</span>
<span class="t" style="left:1391.9px;transform-origin:0 0;top:1424.41px;font-size:28.5px;font-weight:bold;color:#2d3748;transform:scaleX(0.9026);">$101.00</span>
<span class="t" style="left:1465.9px;transform-origin:0 0;top:1497.6px;font-size:20px;color:#2d3748;transform:scaleX(1.083);">Open</span>
<span class="t" style="right:1063.2px;transform-origin:100% 0;top:1346.94px;font-size:22.5px;color:#2d3748;transform:scaleX(1.0067);">Fri 23</span>
<span class="t" style="left:1718.8px;transform-origin:0 0;top:1377.04px;font-size:38.3px;font-weight:bold;color:#2d3748;transform:scaleX(1.08);">5</span>
<span class="t" style="left:1684.8px;transform-origin:0 0;top:1424.41px;font-size:28.5px;font-weight:bold;color:#2d3748;transform:scaleX(0.9026);">$101.00</span>
<span class="t" style="left:1758.8px;transform-origin:0 0;top:1497.6px;font-size:20px;color:#2d3748;transform:scaleX(1.083);">Open</span>
<span class="t" style="right:770.4000000000001px;transform-origin:100% 0;top:1346.94px;font-size:22.5px;color:#2d3748;transform:scaleX(1.0375);">Sat 24</span>
<span class="t" style="left:2011.6px;transform-origin:0 0;top:1377.04px;font-size:38.3px;font-weight:bold;color:#2d3748;transform:scaleX(1.08);">5</span>
<span class="t" style="left:1977.6px;transform-origin:0 0;top:1424.41px;font-size:28.5px;font-weight:bold;color:#2d3748;transform:scaleX(0.9026);">$101.00</span>
<span class="t" style="left:2051.6px;transform-origin:0 0;top:1497.6px;font-size:20px;color:#2d3748;transform:scaleX(1.083);">Open</span>
<span class="t" style="right:2527.5px;transform-origin:100% 0;top:1580.74px;font-size:22.5px;color:#2d3748;transform:scaleX(1.0475);">Sun 25</span>
<span class="t" style="right:2234.7px;transform-origin:100% 0;top:1580.74px;font-size:22.5px;color:#2d3748;transform:scaleX(1.0771);">Mon 26</span>
<span class="t" style="right:1941.8px;transform-origin:100% 0;top:1580.74px;font-size:22.5px;color:#2d3748;transform:scaleX(1.0279);">Tue 27</span>
<span class="t" style="right:1649.0px;transform-origin:100% 0;top:1580.74px;font-size:22.5px;color:#2d3748;transform:scaleX(1.0753);">Wed 28</span>
<span class="t" style="right:1356.1px;transform-origin:100% 0;top:1580.74px;font-size:22.5px;color:#2d3748;transform:scaleX(1.0548);">Thu 29</span>
<span class="t" style="right:1063.2px;transform-origin:100% 0;top:1580.74px;font-size:22.5px;color:#2d3748;transform:scaleX(1.0397);">Fri 30</span>
<span class="t" style="right:770.4000000000001px;transform-origin:100% 0;top:1580.74px;font-size:22.5px;color:#2d3748;transform:scaleX(0.936);">Sat 31</span>
<span class="t" style="left:2293.5px;transform-origin:0 0;top:356.04px;font-size:31.92px;-webkit-text-stroke:1.14px #2d3748;letter-spacing:1.14px;color:#2d3748;transform:scaleX(0.8929);">RP1</span>
<span class="t" style="left:2293.5px;transform-origin:0 0;top:410.64px;font-size:22.5px;color:#2d3748;transform:scaleX(0.8908);">RP1</span>
<span class="t" style="left:2376.6px;transform-origin:0 0;top:498.73px;font-size:24.5px;color:#334155;transform:scaleX(1.0297);">Bed &amp; Breakfast included</span>
<span class="t" style="left:2376.6px;transform-origin:0 0;top:573.83px;font-size:24.5px;color:#334155;transform:scaleX(1.0437);">Refundable</span>
<span class="t" style="left:2325.5px;transform-origin:0 0;top:700.1px;font-size:25.25px;-webkit-text-stroke:0.9px #2d3748;letter-spacing:0.9px;color:#2d3748;transform:scaleX(1.1273);">Bulk update</span>
<span class="t" style="left:2353.5px;transform-origin:0 0;top:791.43px;font-size:24.5px;color:#757575;transform:scaleX(1.0179);">Select date range</span>
<span class="t" style="left:2353.5px;transform-origin:0 0;top:917.53px;font-size:24.5px;color:#757575;transform:scaleX(1.0168);">Choose room types</span>
<span class="t" style="left:2333.6px;transform-origin:0 0;top:1020.39px;font-size:22.87px;-webkit-text-stroke:0.82px #2d3748;letter-spacing:0.82px;color:#2d3748;transform:scaleX(1.1254);">Allotment</span>
<span class="t" style="left:2605.5px;transform-origin:0 0;top:1020.39px;font-size:22.87px;-webkit-text-stroke:0.82px #2d3748;letter-spacing:0.82px;color:#2d3748;transform:scaleX(0.989);">Rate (USD)</span>
<span class="t" style="left:2333.6px;transform-origin:0 0;top:1192.19px;font-size:22.87px;-webkit-text-stroke:0.82px #2d3748;letter-spacing:0.82px;color:#2d3748;transform:scaleX(1.0641);">Availability</span>
<span class="t" style="left:2420px;transform-origin:0 0;top:1239.34px;font-size:22.5px;color:#2d3748;transform:scaleX(1.1172);">Open</span>
<span class="t" style="left:2551px;transform-origin:0 0;top:1355.58px;font-size:24px;color:#ffffff;transform:scaleX(1.1048);">Update</span>
<span class="t" style="left:2349px;transform-origin:0 0;top:1518.09px;font-size:22.87px;-webkit-text-stroke:0.82px #2d3748;letter-spacing:0.82px;color:#2d3748;transform:scaleX(1.0503);">Calendar guide</span>
<span class="t" style="left:2355px;transform-origin:0 0;top:1568.57px;font-size:27px;font-weight:bold;color:#64748b;transform:scaleX(1.131);">$</span>
<span class="t" style="left:2414px;transform-origin:0 0;top:1571.19px;font-size:21px;color:#666666;transform:scaleX(1.0121);">Rate (before tax and promo)</span>
</div>
</div></body></html>
